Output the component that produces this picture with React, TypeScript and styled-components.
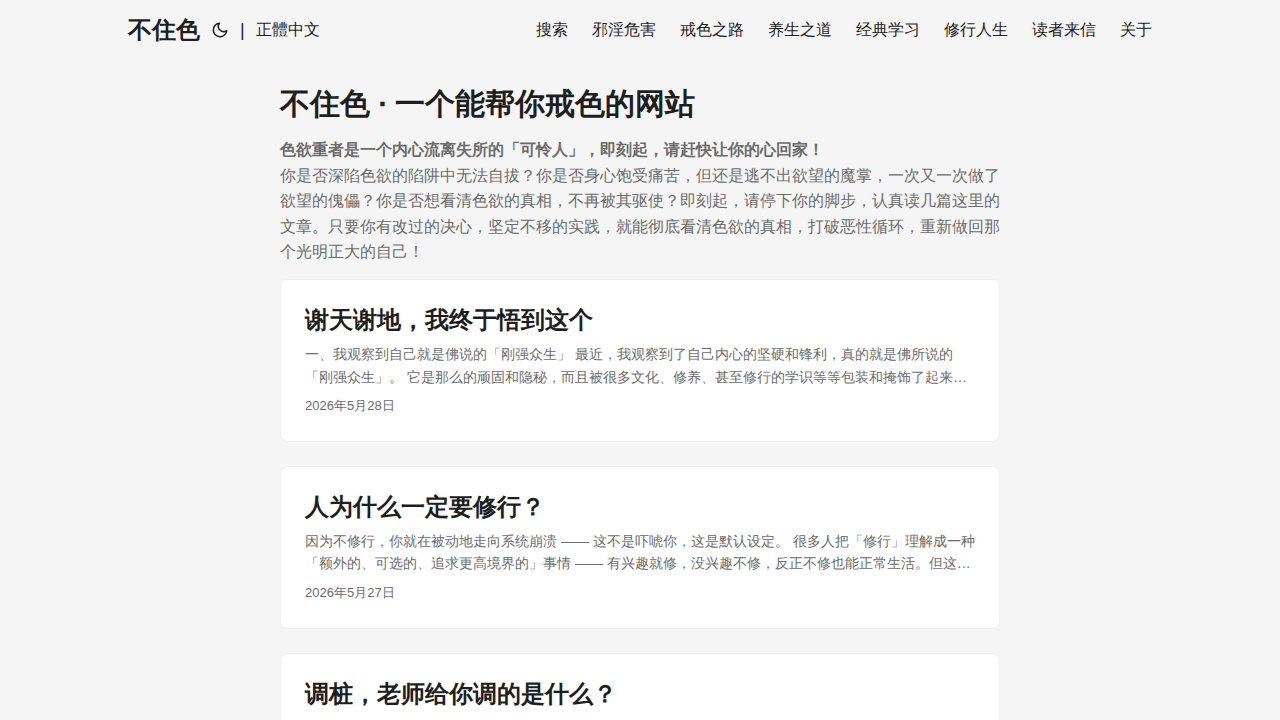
import React from "react";
import styled, { createGlobalStyle } from "styled-components";

const GlobalStyle = createGlobalStyle`
  *, *::before, *::after { box-sizing: border-box; }
  body {
    margin: 0;
    background: #f5f5f5;
    color: #1e1e1e;
    font-family: "Liberation Sans", sans-serif;
    font-size: 18px;
    line-height: 1.6;
    text-spacing-trim: space-all;
  }
  h1, h2, p { margin: 0; }
  a { color: inherit; text-decoration: none; }
`;

const Nav = styled.nav`
  display: flex;
  justify-content: space-between;
  max-width: 1072px;
  margin: 0 auto;
  padding: 0 24px;
  line-height: 60px;
`;

const Brand = styled.div`
  display: flex;
`;

const Logo = styled.a`
  font-size: 24px;
  font-weight: 700;
`;

const Switches = styled.div`
  display: flex;
  align-items: center;
`;

const ThemeToggle = styled.button`
  display: flex;
  margin: 0 3px;
  padding: 8px;
  border: 0;
  background: none;
  color: inherit;
  cursor: pointer;
`;

const LanguageLink = styled.a`
  margin-left: 11px;
  font-size: 16px;
`;

const Menu = styled.ul`
  display: flex;
  gap: 24px;
  margin: 0;
  padding: 0;
  list-style: none;
  font-size: 16px;
`;

const Main = styled.main`
  max-width: 768px;
  margin: 0 auto;
  padding: 20px 24px;
`;

const Intro = styled.header`
  margin-bottom: 14px;
`;

const IntroTitle = styled.h1`
  font-size: 30px;
  line-height: 48px;
`;

const IntroText = styled.p`
  margin-top: 9px;
  color: #6c6c6c;
  font-size: 16px;
`;

const Card = styled.article`
  margin-bottom: 24px;
  padding: 24px;
  border: 1px solid #eeeeee;
  border-radius: 8px;
  background: #ffffff;
`;

const CardTitle = styled.h2`
  font-size: 24px;
  line-height: 1.3;
`;

const Summary = styled.p`
  display: -webkit-box;
  margin: 8px 0;
  overflow: hidden;
  color: #6c6c6c;
  font-size: 14px;
  -webkit-box-orient: vertical;
  -webkit-line-clamp: 2;
`;

const PostDate = styled.time`
  display: block;
  color: #6c6c6c;
  font-size: 13px;
`;

const menu = ["搜索", "邪淫危害", "戒色之路", "养生之道", "经典学习", "修行人生", "读者来信", "关于"];

const posts = [
  {
    title: "谢天谢地，我终于悟到这个",
    summary:
      "一、我观察到自己就是佛说的「刚强众生」 最近，我观察到了自己内心的坚硬和锋利，真的就是佛所说的「刚强众生」。 它是那么的顽固和隐秘，而且被很多文化、修养、甚至修行的学识等等包装和掩饰了起来…",
    iso: "2026-05-28",
    date: "2026年5月28日",
  },
  {
    title: "人为什么一定要修行？",
    summary:
      "因为不修行，你就在被动地走向系统崩溃 —— 这不是吓唬你，这是默认设定。 很多人把「修行」理解成一种「额外的、可选的、追求更高境界的」事情 —— 有兴趣就修，没兴趣不修，反正不修也能正常生活。但这…",
    iso: "2026-05-27",
    date: "2026年5月27日",
  },
  {
    title: "调桩，老师给你调的是什么？",
    summary: "",
    iso: "",
    date: "",
  },
];

const MoonIcon = () => (
  <svg width="18" height="18" viewBox="0 0 24 24" fill="none" stroke="currentColor" strokeWidth="2" strokeLinecap="round" strokeLinejoin="round" aria-hidden="true">
    <path d="M21 12.79A9 9 0 1 1 11.21 3 7 7 0 0 0 21 12.79z" />
  </svg>
);

export default function App() {
  return (
    <>
      <GlobalStyle />
      <Nav>
        <Brand>
          <Logo href="#">不住色</Logo>
          <Switches>
            <ThemeToggle type="button" aria-label="切换主题">
              <MoonIcon />
            </ThemeToggle>
            <span>|</span>
            <LanguageLink href="#">正體中文</LanguageLink>
          </Switches>
        </Brand>
        <Menu>
          {menu.map((item) => (
            <li key={item}>
              <a href="#">{item}</a>
            </li>
          ))}
        </Menu>
      </Nav>
      <Main>
        <Intro>
          <IntroTitle>不住色 ∙ 一个能帮你戒色的网站</IntroTitle>
          <IntroText>
            <strong>色欲重者是一个内心流离失所的「可怜人」，即刻起，请赶快让你的心回家！</strong>
            <br />
            你是否深陷色欲的陷阱中无法自拔？你是否身心饱受痛苦，但还是逃不出欲望的魔掌，一次又一次做了欲望的傀儡？你是否想看清色欲的真相，不再被其驱使？即刻起，请停下你的脚步，认真读几篇这里的文章。只要你有改过的决心，坚定不移的实践，就能彻底看清色欲的真相，打破恶性循环，重新做回那个光明正大的自己！
          </IntroText>
        </Intro>
        {posts.map((post) => (
          <Card key={post.title}>
            <CardTitle>
              <a href="#">{post.title}</a>
            </CardTitle>
            {post.summary && <Summary>{post.summary}</Summary>}
            {post.date && <PostDate dateTime={post.iso}>{post.date}</PostDate>}
          </Card>
        ))}
      </Main>
    </>
  );
}
